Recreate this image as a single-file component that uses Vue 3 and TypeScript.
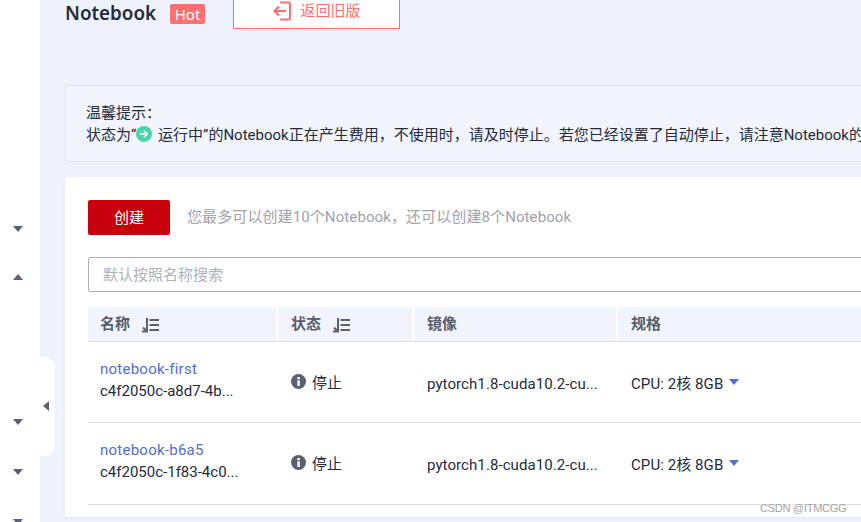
<script setup lang="ts">
interface Row { name: string; id: string; image: string; spec: string }
const rows: Row[] = [
  { name: 'notebook-first', id: 'c4f2050c-a8d7-4b...', image: 'pytorch1.8-cuda10.2-cu...', spec: 'CPU: 2核 8GB' },
  { name: 'notebook-b6a5', id: 'c4f2050c-1f83-4c0...', image: 'pytorch1.8-cuda10.2-cu...', spec: 'CPU: 2核 8GB' },
]
</script>

<template>
  <div class="page">
    <aside class="side">
      <span class="tri down first"></span>
      <span class="tri up second"></span>
      <span class="tri down third"></span>
      <span class="tri down fourth"></span>
      <span class="tri down fifth"></span>
    </aside>
    <div class="handle"><span class="tri-left"></span></div>
    <main class="main">
      <header class="head">
        <h1 class="title">Notebook</h1>
        <span class="hot">Hot</span>
        <button class="old">
          <svg class="old-icon" viewBox="0 0 20 20" width="20" height="20" fill="none" stroke="#fb7070" stroke-width="2">
            <path d="M8 1.500h8.500a1.500 1.500 0 0 1 1.500 1.500v14a1.500 1.500 0 0 1-1.500 1.500H8" />
            <path d="M14 10H3" stroke-width="2.200" />
            <path d="M7 5.500 2.500 10 7 14.500" stroke-width="2.200" />
          </svg>
          <span>返回旧版</span>
        </button>
      </header>
      <section class="notice">
        <p>温馨提示：</p>
        <p class="notice-line">状态为“<svg class="run" viewBox="0 0 16 16" width="16" height="16"><circle cx="8" cy="8" r="8" fill="#4fd1a9" /><path d="M4 8h7M8 4.800 11.200 8 8 11.200" fill="none" stroke="#fff" stroke-width="1.500" /></svg> 运行中”的Notebook正在产生费用，不使用时，请及时停止。若您已经设置了自动停止，请注意Notebook的</p>
      </section>
      <section class="card">
        <div class="actions">
          <button class="create">创建</button>
          <span class="hint">您最多可以创建10个Notebook，还可以创建8个Notebook</span>
        </div>
        <div class="search">默认按照名称搜索</div>
        <div class="table">
          <div class="tr th">
            <div class="c c1">名称<svg class="sort" viewBox="0 0 20 16" width="20" height="16" fill="none" stroke="#5a6072" stroke-width="2"><path d="M8 1v13.500H3M7.500 14 4 10.500" stroke-width="2"/><path d="M10.500 3H20M10.500 8H20M10.500 13H20" /></svg></div>
            <div class="c c2">状态<svg class="sort" viewBox="0 0 20 16" width="20" height="16" fill="none" stroke="#5a6072" stroke-width="2"><path d="M8 1v13.500H3M7.500 14 4 10.500" stroke-width="2"/><path d="M10.500 3H20M10.500 8H20M10.500 13H20" /></svg></div>
            <div class="c c3">镜像</div>
            <div class="c c4">规格</div>
          </div>
          <div v-for="r in rows" :key="r.name" class="tr td">
            <div class="c c1 name-cell">
              <a class="link">{{ r.name }}</a>
              <span>{{ r.id }}</span>
            </div>
            <div class="c c2 status">
              <svg viewBox="0 0 16 16" width="15" height="15"><circle cx="8" cy="8" r="8" fill="#5a6072" /><rect x="6.800" y="6.800" width="2.600" height="6" fill="#fff" /><rect x="6.800" y="3.200" width="2.600" height="2.400" fill="#fff" /></svg>
              <span class="status-text">停止</span>
            </div>
            <div class="c c3 val">{{ r.image }}</div>
            <div class="c c4 val">{{ r.spec }}<span class="spec-tri"></span></div>
          </div>
        </div>
      </section>
    </main>
    <div class="mark">CSDN @ITMCGG</div>
  </div>
</template>

<style>
html, body { margin: 0; padding: 0; background: #fff; }
</style>

<style scoped>
.page {
  position: relative;
  display: flex;
  width: 861px;
  height: 522px;
  overflow: hidden;
  background: #eef2fd;
  color: #252b3a;
  font: 15px/22px Roboto, "Noto Sans CJK SC", sans-serif;
}
.side {
  flex: none;
  width: 40px;
  height: 522px;
  background: #fff;
  display: flex;
  flex-direction: column;
  align-items: center;
  box-sizing: border-box;
}
.tri { display: block; width: 0; height: 0; margin-left: -4px; border-left: 5px solid transparent; border-right: 5px solid transparent; }
.down { border-top: 6px solid #5a6072; }
.up { border-bottom: 6px solid #5a6072; }
.first { margin-top: 226px; }
.second { margin-top: 42px; }
.third { margin-top: 139px; }
.fourth { margin-top: 44px; }
.fifth { margin-top: 44px; }
.handle {
  position: absolute;
  left: 40px;
  top: 356px;
  width: 15px;
  height: 100px;
  background: #fff;
  border-radius: 0 12px 12px 0;
  display: flex;
  align-items: center;
}
.tri-left {
  margin-left: 3px;
  width: 0;
  height: 0;
  border-top: 5px solid transparent;
  border-bottom: 5px solid transparent;
  border-right: 6px solid #5a6072;
}
.main {
  flex: 1;
  min-width: 0;
  padding-left: 25px;
}
.head {
  display: flex;
  align-items: flex-start;
  height: 85px;
}
.title {
  margin: 0;
  width: 91px;
  flex: none;
  font-family: "Noto Sans", sans-serif;
  font-size: 18.8px;
  font-weight: 600;
  line-height: 26px;
  white-space: nowrap;
}
.hot {
  margin: 4px 0 0 14px;
  width: 35px;
  height: 20px;
  background: #fb7070;
  border-radius: 2px;
  color: #fff;
  font-size: 15px;
  line-height: 20px;
  text-align: center;
  font-family: "Noto Sans", sans-serif;
}
.old {
  box-sizing: border-box;
  margin: -10px 0 0 28px;
  width: 167px;
  height: 39px;
  background: #fff;
  border: 1px solid #fb7070;
  color: #fb7070;
  font: inherit;
  display: flex;
  align-items: center;
  justify-content: center;
  gap: 8px;
  padding: 3px 0 0;
}
.old-icon { flex: none; }
.notice {
  box-sizing: border-box;
  width: 830px;
  height: 77px;
  padding: 16px 20px 0;
  background: #f1f4fd;
  border: 1px solid #e2e4ec;
  border-radius: 2px;
  white-space: nowrap;
  overflow: hidden;
}
.notice p { margin: 0; }
.run { vertical-align: -2px; margin-right: 2px; }
.card {
  margin-top: 15px;
  width: 830px;
  height: 340px;
  box-sizing: border-box;
  padding: 23px 0 0 23px;
  background: #fff;
  box-shadow: 0 1px 3px rgba(80, 100, 160, 0.08);
}
.actions { display: flex; align-items: center; gap: 17px; height: 35px; }
.create {
  width: 82px;
  height: 35px;
  border: 0;
  border-radius: 2px;
  background: #c7000b;
  color: #fff;
  font: inherit;
  padding: 0;
}
.hint { color: #a0a2ad; margin-top: -2px; letter-spacing: 0.1px; }
.search {
  box-sizing: border-box;
  margin-top: 22px;
  height: 35px;
  border: 1px solid #adb0b8;
  border-radius: 2px;
  padding: 0 14px;
  line-height: 34px;
  color: #adb0b8;
}
.table { margin-top: 15px; }
.tr { display: flex; border-bottom: 1px solid #dfe1e6; }
.th { height: 35px; box-sizing: border-box; background: #f1f4fd; font-weight: 600; color: #575d6c; }
.td { height: 81px; box-sizing: border-box; }
.td + .td { height: 82px; padding-bottom: 1px; }
.c { box-sizing: border-box; display: flex; align-items: center; white-space: nowrap; }
.c1 { width: 190px; padding-left: 12px; }
.c2 { width: 136px; padding-left: 13px; }
.c3 { width: 204px; padding-left: 13px; }
.c4 { flex: 1; padding-left: 13px; }
.th .c { border-right: 2px solid #fff; }
.sort { margin: 2px 0 0 9px; }
.name-cell { flex-direction: column; align-items: flex-start; justify-content: center; padding-bottom: 4px; }
.link { color: #526ecc; line-height: 22px; letter-spacing: 0.25px; }
.status { gap: 6px; padding-bottom: 2px; }
.status-text { margin-top: 4px; }
.val { padding-top: 4px; letter-spacing: 0.08px; }
.spec-tri {
  margin: -4px 0 0 6px;
  width: 0;
  height: 0;
  border-left: 5px solid transparent;
  border-right: 5px solid transparent;
  border-top: 6px solid #526ecc;
}
.mark {
  position: absolute;
  left: 760px;
  top: 500px;
  font: 11px/16px "Liberation Sans", sans-serif;
  letter-spacing: -0.25px;
  color: #a3a3a3;
  white-space: nowrap;
}
</style>
